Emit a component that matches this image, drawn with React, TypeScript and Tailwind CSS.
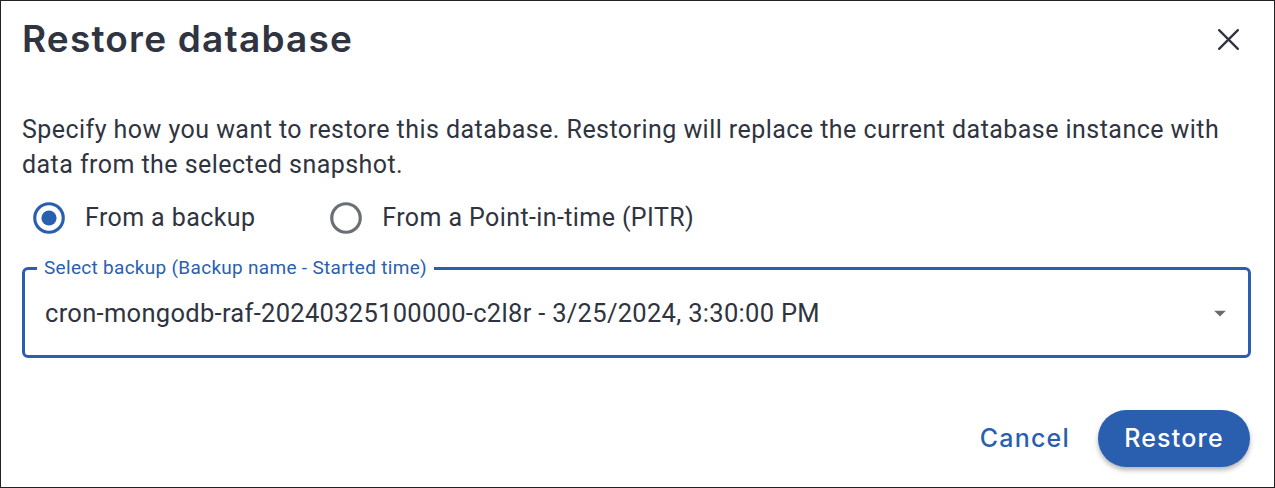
import React, { useState } from "react"

const BLUE = "#2a5fb0"

const RadioIcon = ({ checked }: { checked: boolean }) => (
    <svg width="38" height="38" viewBox="0 0 24 24" className="shrink-0">
        <circle
            cx="12"
            cy="12"
            r="9"
            fill="none"
            stroke={checked ? BLUE : "#6b6e73"}
            strokeWidth="2"
        />
        {checked && <circle cx="12" cy="12" r="4.8" fill={BLUE} />}
    </svg>
)

const App = () => {
    const [mode, setMode] = useState<"backup" | "pitr">("backup")

    return (
        <div className="flex h-[488px] w-[1275px] flex-col border border-[#222] bg-white font-['Roboto',sans-serif] text-[#2f3440]">
            {/* Header */}
            <div className="flex items-center justify-between pl-[21px] pr-[30px] pt-[16px]">
                <h2 className="font-['Inter',sans-serif] text-[37px] font-semibold leading-[44px] tracking-[1.2px] text-[#2f3440]">
                    Restore database
                </h2>
                <button className="flex h-8 w-8 items-center justify-center text-[#2f3440]">
                    <svg width="25" height="25" viewBox="0 0 24 24" fill="none" stroke="currentColor" strokeWidth="2.2" strokeLinecap="round">
                        <path d="M3 3 L21 21 M21 3 L3 21" />
                    </svg>
                </button>
            </div>

            {/* Body */}
            <div className="flex flex-col px-[21px] pt-[51px]">
                <p className="text-[25px] leading-[35px] tracking-[0.45px] text-[#2f3440]">
                    Specify how you want to restore this database. Restoring will replace the current database instance with
                    data from the selected snapshot.
                </p>

                <div className="mt-[17px] flex items-center gap-[72px] pl-[8px] text-[25px] tracking-[0.4px]">
                    <label className="flex cursor-pointer items-center gap-[17px]" onClick={() => setMode("backup")}>
                        <RadioIcon checked={mode === "backup"} />
                        <span>From a backup</span>
                    </label>
                    <label className="flex cursor-pointer items-center gap-[17px]" onClick={() => setMode("pitr")}>
                        <RadioIcon checked={mode === "pitr"} />
                        <span>From a Point-in-time (PITR)</span>
                    </label>
                </div>

                <fieldset className="mt-[21px] w-[1229px] rounded-[6px] border-[3px] border-[#2a5fb0] px-[12px]">
                    <legend className="px-[7px] text-[19px] leading-[20px] tracking-[0.3px] text-[#2a5fb0]">
                        Select backup (Backup name - Started time)
                    </legend>
                    <div className="flex h-[77px] items-center justify-between pb-[6px] pl-[8px] pr-[6px]">
                        <span className="text-[25.5px] tracking-[0.3px] text-[#2f3440]">
                            cron-mongodb-raf-20240325100000-c2l8r - 3/25/2024, 3:30:00 PM
                        </span>
                        <svg width="20" height="20" viewBox="0 0 24 24" fill="#6b6b6b">
                            <path d="M5 8 L19 8 L12 15 Z" />
                        </svg>
                    </div>
                </fieldset>
            </div>

            {/* Actions */}
            <div className="mt-auto flex items-center justify-end gap-[24px] pb-[20px] pr-[24px]">
                <button className="px-[4px] font-['Inter',sans-serif] text-[25px] font-medium tracking-[1.2px] text-[#2a5fb0]">
                    Cancel
                </button>
                <button className="h-[57px] w-[152px] rounded-full bg-[#2a5fb0] font-['Inter',sans-serif] text-[25px] font-medium tracking-[1.2px] text-white shadow-[0_3px_5px_rgba(0,0,0,0.3)]">
                    Restore
                </button>
            </div>
        </div>
    )
}

export default App
